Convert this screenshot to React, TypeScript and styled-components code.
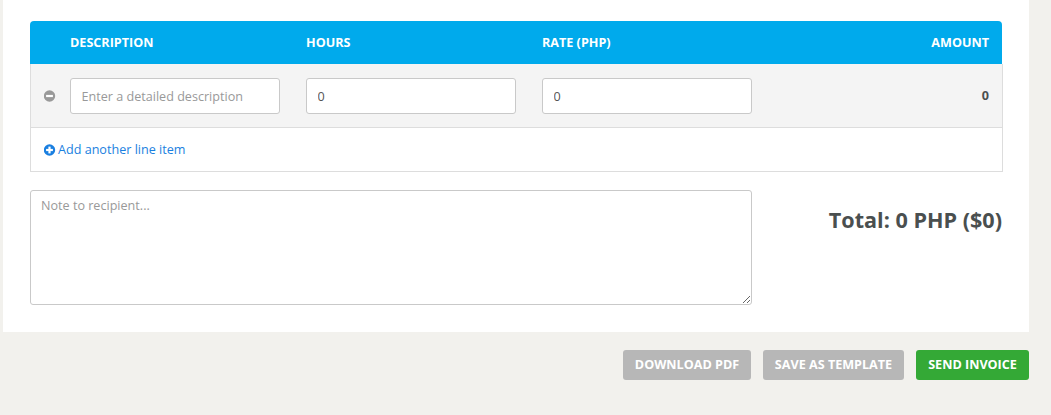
import React from "react";
import styled, { createGlobalStyle } from "styled-components";

const GlobalStyle = createGlobalStyle`
  html, body {
    margin: 0;
    padding: 0;
    background-color: #f2f1ed;
    font-family: "Open Sans", "Liberation Sans", sans-serif;
    overflow: hidden;
  }
  * {
    box-sizing: border-box;
  }
`;

const CircleIcon: React.FC<{ plus?: boolean; color: string }> = ({ plus, color }) => (
  <svg width="12" height="12" viewBox="0 0 12 12">
    <circle cx="5.5" cy="6" r="5.7" fill={color} />
    <rect x="2.1" y="4.9" width="6.8" height="2.2" fill="#fff" />
    {plus && <rect x="4.4" y="2.6" width="2.2" height="6.8" fill="#fff" />}
  </svg>
);

const App: React.FC = () => {
  return (
    <Page>
      <GlobalStyle />
      <Card>
        <Table>
          <HeaderRow>
            <HeaderCell>Description</HeaderCell>
            <HeaderCell>Hours</HeaderCell>
            <HeaderCell>Rate (PHP)</HeaderCell>
            <AmountHeader>Amount</AmountHeader>
          </HeaderRow>
          <ItemRow>
            <RemoveButton>
              <CircleIcon color="#999999" />
            </RemoveButton>
            <Field placeholder="Enter a detailed description" />
            <Field defaultValue="0" />
            <Field defaultValue="0" />
            <AmountValue>0</AmountValue>
          </ItemRow>
          <AddRow>
            <AddLink>
              <CircleIcon plus color="#1a7fe0" />
              <span>Add another line item</span>
            </AddLink>
          </AddRow>
        </Table>
        <Summary>
          <Note placeholder="Note to recipient..." />
          <Total>Total: 0 PHP ($0)</Total>
        </Summary>
      </Card>
      <Actions>
        <ActionButton $color="#b7b7b7" $width={128}>Download PDF</ActionButton>
        <ActionButton $color="#b7b7b7" $width={141}>Save as template</ActionButton>
        <ActionButton $color="#34a936" $width={113}>Send invoice</ActionButton>
      </Actions>
    </Page>
  );
};

const Page = styled.div`
  width: 1051px;
  height: 415px;
  padding: 0 22px 0 3px;
`;

const Card = styled.div`
  height: 332px;
  padding: 21px 27px 0;
  background-color: #ffffff;
`;

const Table = styled.div`
  width: 973px;
`;

const HeaderRow = styled.div`
  display: grid;
  grid-template-columns: 236px 236px 1fr auto;
  align-items: center;
  width: 972px;
  height: 43px;
  padding: 0 13px 0 40px;
  background-color: #00aaec;
  border-radius: 4px 4px 0 0;
`;

const HeaderCell = styled.div`
  font-size: 12.6px;
  font-weight: 700;
  line-height: 16px;
  color: #ffffff;
  text-transform: uppercase;
`;

const AmountHeader = styled(HeaderCell)`
  text-align: right;
`;

const ItemRow = styled.div`
  display: flex;
  align-items: center;
  height: 64px;
  padding: 0 13px;
  background-color: #f4f4f4;
  border: solid #dddddd;
  border-width: 0 1px 1px;
`;

const RemoveButton = styled.div`
  display: flex;
  width: 25px;
  margin-right: 1px;
`;

const Field = styled.input`
  width: 210px;
  height: 36px;
  margin-right: 26px;
  padding: 2px 10px 0 10.5px;
  border: 1px solid #c9c9c9;
  border-radius: 3px;
  background-color: #ffffff;
  font-family: inherit;
  font-size: 12.6px;
  color: #555555;
  outline: none;

  &::placeholder {
    color: #999999;
    opacity: 1;
  }
`;

const AmountValue = styled.div`
  flex: 1;
  font-size: 12.6px;
  font-weight: 700;
  text-align: right;
  color: #4a4f4f;
`;

const AddRow = styled.div`
  display: flex;
  align-items: center;
  height: 44px;
  padding: 0 14px 0 13px;
  border: solid #dddddd;
  border-width: 0 1px 1px;
`;

const AddLink = styled.a`
  display: flex;
  align-items: center;
  gap: 2px;
  font-size: 12.6px;
  color: #1a7fe0;
`;

const Summary = styled.div`
  display: flex;
  justify-content: space-between;
  align-items: flex-start;
  width: 972px;
  margin-top: 18px;
`;

const Note = styled.textarea`
  display: block;
  width: 722px;
  height: 115px;
  padding: 6px 10px;
  border: 1px solid #c9c9c9;
  border-radius: 3px;
  font-family: inherit;
  font-size: 12.6px;
  color: #555555;
  outline: none;

  &::placeholder {
    color: #999999;
    opacity: 1;
  }
`;

const Total = styled.div`
  margin-top: 16px;
  font-size: 21.6px;
  font-weight: 700;
  line-height: 27px;
  color: #4a4f4f;
`;

const Actions = styled.div`
  display: flex;
  justify-content: flex-end;
  gap: 12px;
  margin-top: 18px;
`;

const ActionButton = styled.button<{ $color: string; $width: number }>`
  width: ${(props) => props.$width}px;
  height: 30px;
  padding: 0 0 2px;
  border: none;
  border-radius: 3px;
  background-color: ${(props) => props.$color};
  font-family: inherit;
  font-size: 12.6px;
  font-weight: 700;
  color: #ffffff;
  text-transform: uppercase;
`;

export default App;
